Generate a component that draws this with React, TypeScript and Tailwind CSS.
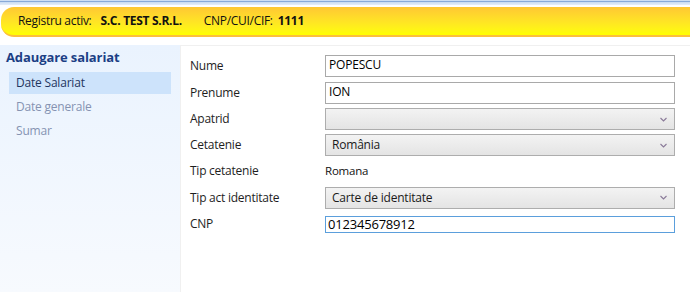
import React from 'react'

const Chevron = () => (
  <svg width="7" height="5" viewBox="0 0 7 5" className="shrink-0">
    <path d="M0.5 1 L3.5 4 L6.5 1" fill="none" stroke="#8a7a99" strokeWidth="1.1" />
  </svg>
)

const TextBox = ({ value }: { value: string }) => (
  <div className="h-[22px] w-[350px] border border-[#a9a9a9] bg-white pl-[3px] text-[12px] leading-[17px] tracking-[-0.2px] text-black">
    {value}
  </div>
)

const Select = ({ value }: { value: string }) => (
  <div className="flex h-[22px] w-[350px] items-center justify-between border border-[#adadad] bg-gradient-to-b from-[#f3f3f3] to-[#e4e4e4] pl-[6px] pr-[7px] text-[12px] tracking-[-0.2px] text-[#1a1a1a]">
    <span>{value}</span>
    <Chevron />
  </div>
)

const rows: { label: string; h: string; field: React.ReactNode }[] = [
  { label: 'Nume', h: 'h-[27px]', field: <TextBox value="POPESCU" /> },
  { label: 'Prenume', h: 'h-[27px]', field: <TextBox value="ION" /> },
  { label: 'Apatrid', h: 'h-[26px]', field: <Select value="" /> },
  { label: 'Cetatenie', h: 'h-[26px]', field: <Select value="România" /> },
  { label: 'Tip cetatenie', h: 'h-[26px]', field: <span className="text-[11.5px] tracking-[-0.2px] text-[#111]">Romana</span> },
  { label: 'Tip act identitate', h: 'h-[27px]', field: <Select value="Carte de identitate" /> },
  {
    label: 'CNP',
    h: 'h-[26px]',
    field: (
      <div className="h-[17px] w-[350px] border border-[#5b9fdc] bg-white pl-[2px] text-[13px] leading-[15px] tracking-[-0.2px] text-black">
        012345678912
      </div>
    ),
  },
]

export default function App() {
  return (
    <div className="h-[292px] w-[690px] overflow-hidden bg-white font-['Open_Sans',sans-serif]">
      {/* top strip */}
      <div className="h-[1px] bg-[#cfdff3]" />
      <div className="h-[1px] bg-[#8aaad8]" />
      <div className="h-[3px] bg-gradient-to-b from-[#c9dbf2] to-[#e6eef9]" />

      {/* banner */}
      <div className="pl-[1px] pt-[2px]">
        <div className="-mr-4 flex h-[30px] items-center rounded-l-[13px] border-b-2 border-[#fdbf3c] bg-gradient-to-b from-[#ffc733] to-[#ffff00] pl-[17px] text-[12px] tracking-[-0.3px] text-[#111]">
          <span>Registru activ:</span>
          <span className="ml-[9px] font-bold">S.C. TEST S.R.L.</span>
          <span className="ml-[22px]">CNP/CUI/CIF:</span>
          <span className="ml-[5px] font-bold">1111</span>
        </div>
      </div>

      {/* body */}
      <div className="mt-[8px] flex h-[247px]">
        <div className="w-[180px] bg-gradient-to-b from-[#eaf3fe] to-[#f7fafe] pt-[3px]">
          <div className="pl-[6px] text-[13px] font-bold leading-[19px] tracking-[-0.1px] text-[#1c3f85]">Adaugare salariat</div>
          <div className="mt-[5px] flex flex-col gap-[2px]">
            <div className="mx-[9px] flex h-[22px] items-center bg-[#cde3fb] pl-[7px] text-[12px] tracking-[-0.2px] text-[#1f3560]">
              Date Salariat
            </div>
            <div className="mx-[9px] flex h-[22px] items-center pl-[7px] text-[12px] tracking-[-0.2px] text-[#8593b2]">Date generale</div>
            <div className="mx-[9px] flex h-[22px] items-center pl-[7px] text-[12px] tracking-[-0.2px] text-[#8593b2]">Sumar</div>
          </div>
        </div>

        <div className="flex-1 border-l border-t border-[#f0f0f0] pl-[9px] pt-[6px]">
          {rows.map((r) => (
            <div key={r.label} className={`flex items-center ${r.h}`}>
              <div className="w-[135px] text-[12px] tracking-[-0.25px] text-[#1e1e1e]">{r.label}</div>
              {r.field}
            </div>
          ))}
        </div>
      </div>
    </div>
  )
}
